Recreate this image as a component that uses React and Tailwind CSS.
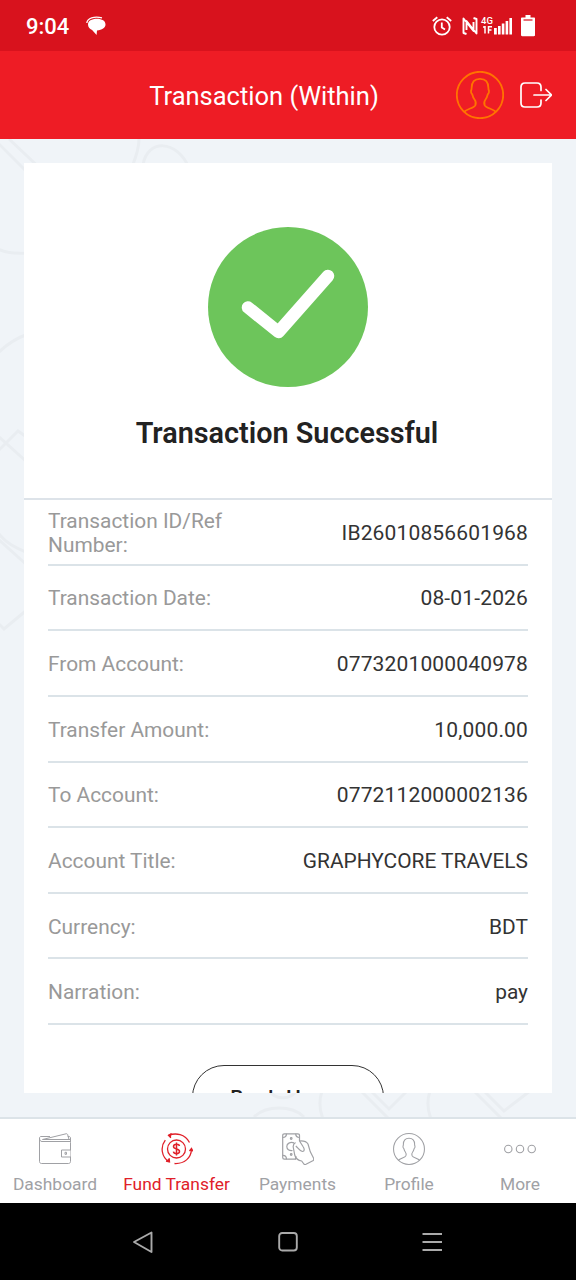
const details = [
  { label: 'Transaction ID/Ref Number:', value: 'IB26010856601968' },
  { label: 'Transaction Date:', value: '08-01-2026' },
  { label: 'From Account:', value: '0773201000040978' },
  { label: 'Transfer Amount:', value: '10,000.00' },
  { label: 'To Account:', value: '0772112000002136' },
  { label: 'Account Title:', value: 'GRAPHYCORE TRAVELS', tight: true },
  { label: 'Currency:', value: 'BDT', tight: true },
  { label: 'Narration:', value: 'pay', tight: true },
];

function UserIcon({ className, strokeWidth }) {
  return (
    <svg viewBox="0 0 48 48" fill="none" stroke="currentColor" strokeWidth={strokeWidth} className={className}>
      <circle cx="24" cy="24" r="23.2" />
      <path d="M7.800 41.200C11 37.800 18 37 19.300 34.300c.9-2 .6-4-.8-5.800-1.300-1.600-1.800-3.200-2.200-5-.9-.8-1.500-2-1.300-3.500.2-1 .7-1.500.6-3C15.600 11 18 7.800 24 7.800s8.400 3.200 8.400 9.200c-.1 1.500.4 2 .6 3 .2 1.500-.4 2.700-1.300 3.500-.4 1.800-.9 3.400-2.200 5-1.400 1.800-1.700 3.800-.8 5.800 1.300 2.700 8.300 3.500 11.500 6.900" />
    </svg>
  );
}

function StatusBar() {
  return (
    <div className="flex h-[51px] shrink-0 items-center bg-[#d8121d] pl-[26px] pr-[41px] text-white">
      <span className="w-[44px] whitespace-nowrap pt-[2px] text-[22px] font-medium">9:04</span>
      <svg viewBox="0 0 20 20" className="ml-4 h-5 w-5">
        <path d="M.8 7C1.500 2 8 .2 16 1.800" fill="none" stroke="currentColor" strokeWidth="1.300" />
        <path d="M11 2.800C16 2.800 19.500 5 19.500 8.500c0 3.200-3.500 5.500-8.500 6l-.4 4.500-4.500-5C3.500 13 2 11 2 8.500 2 5 5.500 2.800 11 2.800z" fill="currentColor" />
      </svg>
      <div className="ml-auto flex items-center">
        <svg viewBox="0 0 20 20" fill="none" stroke="currentColor" strokeWidth="1.800" className="h-5 w-5">
          <circle cx="10" cy="11" r="7.700" />
          <path d="M9.800 6.500v5l3.200 2M.8 5l4.500-3.800M19.200 5l-4.500-3.800" />
        </svg>
        <svg viewBox="0 0 16 20" fill="none" stroke="currentColor" strokeWidth="1.900" strokeLinejoin="round" className="ml-[10px] h-5 w-4">
          <path d="M4.500 18L1.500 17V2.500L11.500 15V6M11.500 2l3 1v14.500L4.500 5v9" />
        </svg>
        <div className="ml-[3px] flex h-5 w-[13px] flex-col">
          <span className="text-[9.500px] font-medium leading-[10px]">4G</span>
          <svg viewBox="0 0 12 8" className="h-2 w-3" fill="none" stroke="currentColor" strokeWidth="1.500">
            <path d="M4 0v7.500M2 1H4M7.500 7.500V.8h3.500M7.500 4h3" />
          </svg>
        </div>
        <svg viewBox="0 0 18 18" fill="currentColor" className="h-[18px] w-[18px]">
          <path d="M0 11h2.800v6.500H0zM4 9h2.600v8.500H4zM7.800 6.500h2.600v11H7.800zM11.600 4h2.600v13.500h-2.600zM15.400 1H18v16.500h-2.600z" />
        </svg>
        <svg viewBox="0 0 14 22" className="ml-[9px] h-[22px] w-[14px]">
          <path d="M4.500 0h5v2.500H13c.6 0 1 .4 1 1V20c0 .8-.4 1.200-1.200 1.200H1.200C.4 21.200 0 20.800 0 20V3.500c0-.6.400-1 1-1h3.500z" fill="currentColor" />
          <path d="M2.500 5h9" stroke="#d8121d" strokeWidth="1.200" />
        </svg>
      </div>
    </div>
  );
}

function Header() {
  return (
    <header className="flex h-[88px] shrink-0 items-center bg-[#ee1c25] pl-[120px] pr-6 text-white">
      <h1 className="w-72 pt-[3px] text-center text-[25.500px] leading-none">Transaction (Within)</h1>
      <UserIcon strokeWidth="1.800" className="ml-12 size-12 text-[#ff7300]" />
      <svg viewBox="0 0 32 26" fill="none" stroke="currentColor" strokeWidth="1.700" strokeLinecap="round" strokeLinejoin="round" className="ml-4 h-[26px] w-8">
        <path d="M21 8.500V5c0-2.500-1.500-4-4-4H5C2.500 1 1 2.500 1 5v16c0 2.500 1.500 4 4 4h12c2.500 0 4-1.500 4-4v-3M14 13h17.500M26 7.500l5.500 5.500-5.500 5.500" />
      </svg>
    </header>
  );
}

// faint line pattern behind the card
function Pattern() {
  return (
    <svg viewBox="0 0 576 978" fill="none" stroke="#e9edf1" strokeWidth="3" className="absolute inset-0 h-full w-full">
      <path d="M-4 2l40 40M9 0l36 34M139 0c0 10-3 18-7 28M143 26c4-26 34-26 46 3M-2 110c8 4 17 5 30 4M-2 214c8-8 16-14 30-19M-2 297l30 27M-2 312l20-20 10 7M-2 394c8 10 16 14 30 20M-2 400l30 27M-2 484l6 6 24-20" />
      <path d="M270 952c4 8 20 10 26 0M254 978c12-12 38-12 50 0M322 952c-3 9-3 18 1 28M361 952l27 27M371 952l18 18 18-18M430 952c-3 9-3 18 1 28M474 952l27 27M484 952l20 20 26-20" />
    </svg>
  );
}

function SuccessCard() {
  return (
    <div className="relative h-full overflow-hidden bg-white">
      <div className="flex h-[337px] flex-col items-center border-b-2 border-[#dde3e9] pt-16">
        <svg viewBox="0 0 160 160" className="h-40 w-40">
          <circle cx="80" cy="80" r="80" fill="#6dc55b" />
          <path d="M40 80.500L70.500 105 120 49" fill="none" stroke="#fff" strokeWidth="12.500" strokeLinecap="round" strokeLinejoin="round" />
        </svg>
        <h2 className="mt-[29px] whitespace-nowrap pr-[2px] text-[28.800px] font-semibold leading-[34px] text-[#222]">Transaction Successful</h2>
      </div>
      <dl className="px-6">
        {details.map((row) => (
          <div key={row.label} className="flex h-[65.650px] items-center justify-between border-b-2 border-[#dbe3e8] pt-[2px]">
            <dt className="w-[200px] text-[20.900px] leading-6 text-[#999]">{row.label}</dt>
            <dd className={`whitespace-nowrap leading-6 text-[#333] ${row.tight ? 'text-[20.900px]' : 'text-[21px] tracking-[0.150px]'}`}>
              {row.value}
            </dd>
          </div>
        ))}
      </dl>
      <button className="mx-auto mt-10 flex h-16 w-48 items-center justify-center rounded-full border-[1.500px] border-[#333] pt-[3px] text-[21px] font-medium tracking-[0.800px] text-[#222]">
        Back Home
      </button>
    </div>
  );
}

function WalletIcon() {
  return (
    <svg viewBox="0 0 32 32" fill="none" stroke="currentColor" strokeWidth="1" strokeLinejoin="round" className="size-8">
      <path d="M.5 5v23.500c0 1.200.8 2 2 2h27c1.200 0 2-.8 2-2V24M31.500 17V9.500M.5 5c0 2 1 3.500 2.500 3.500h28M.5 5c0-.9.700-1.500 1.500-1.500h9M3.500 6.500L27 .8c1-.2 1.500.2 1.700 1l1.300 4.700M3.500 6.500h28v3M28.800 3.500h1.200c.8 0 1.500.6 1.500 1.500v2" />
      <path d="M32 17h-9.500v7H32zM26 19.300h1.500v2H26z" />
    </svg>
  );
}

function TransferIcon() {
  return (
    <svg viewBox="0 0 32 32" fill="none" stroke="currentColor" strokeWidth="1.300" className="size-8">
      <circle cx="15.500" cy="16" r="9" />
      <path d="M7.500 2.300C15-.5 24 1 28.500 9.500M30.500 16.500C30 25 23.500 31 13.500 30.500M8 28.800C.5 24 -1 14 4.300 7.200" />
      <path d="M10.500.5L7.500 2.300l2.400 2.600M28.500 18l2-2.500 1.500 2.800M5 28l3.500.8-.3-3.600" fill="currentColor" />
      <path d="M18.500 13c-.3-1.300-1.500-1.800-3-1.800-1.800 0-3 .9-3 2.300 0 3.300 6 1.500 6 4.800 0 1.500-1.200 2.400-3 2.400-1.600 0-2.800-.7-3.100-2M15.500 9.500v13" strokeWidth="1.500" />
    </svg>
  );
}

function PaymentsIcon() {
  return (
    <svg viewBox="0 0 32 32" fill="none" stroke="currentColor" strokeWidth="1.200" strokeLinejoin="round" className="size-8">
      <path d="M17.500 8V2.500c0-1-.6-1.700-1.600-1.700H2.300C1.300.8.7 1.500.7 2.500v22c0 1 .6 1.700 1.600 1.700H14" />
      <path d="M.7 4.500C3 4.500 4.500 3 4.500.8M13.700.8c0 2.200 1.600 3.700 3.800 3.700M.7 22.400c2.300 0 3.800 1.500 3.800 3.800M13.500 26.200c0-1.200.2-2 .9-2.800" />
      <path d="M12 9.800C8 8.700 4.800 10.500 4.800 13.500c0 2.800 2.300 4.300 5.700 4M13.500 9.500c-1.500 1-2.500 2.600-2.300 4.500l1.500 8c1 3.500 3 5.500 7 6l1.800 2.500c.5 1 1.500 1.200 2.500.8l6.800-3.500c.9-.6 1.300-1.600.7-2.800l-3.200-6.200-2.300-7.800c-1.500-2.500-5-3.300-8.500-3L21 13.500c1.500 2.200 1.800 4.500-.2 5-2.500.2-4.500-3.500-7-5.500" />
      <circle cx="9.200" cy="5.500" r=".8" />
      <circle cx="9.200" cy="21.500" r=".8" />
    </svg>
  );
}

function MoreIcon() {
  return (
    <svg viewBox="0 0 32 32" fill="none" stroke="currentColor" strokeWidth="1.100" className="size-8">
      <circle cx="4.300" cy="16" r="3.700" />
      <circle cx="16" cy="16" r="3.700" />
      <circle cx="27.700" cy="16" r="3.700" />
    </svg>
  );
}

const tabs = [
  { name: 'Dashboard', icon: <WalletIcon />, width: 'w-[110px]' },
  { name: 'Fund Transfer', icon: <TransferIcon />, width: 'w-[133px]', active: true },
  { name: 'Payments', icon: <PaymentsIcon />, width: 'w-[109px]' },
  { name: 'Profile', icon: <UserIcon strokeWidth="1.600" className="size-8" />, width: 'w-[114px]' },
  { name: 'More', icon: <MoreIcon />, width: 'w-[108px]' },
];

function TabBar() {
  return (
    <nav className="flex h-[86px] shrink-0 border-t-2 border-[#dce3e8] bg-white">
      {tabs.map((tab) => (
        <button
          key={tab.name}
          className={`flex flex-col items-center pt-[14px] ${tab.width} ${tab.active ? 'text-[#e02029]' : 'text-[#a0a1a5]'}`}
        >
          {tab.icon}
          <span className="mt-[7px] whitespace-nowrap text-[17.400px] leading-6">{tab.name}</span>
        </button>
      ))}
    </nav>
  );
}

function SystemNav() {
  return (
    <div className="flex h-[77px] shrink-0 items-center justify-between bg-black px-[131px] text-[#aaa]">
      <svg viewBox="0 0 24 24" fill="none" stroke="currentColor" strokeWidth="1.900" strokeLinejoin="round" className="size-6">
        <path d="M20.500 2.500v19.500L3 12z" />
      </svg>
      <svg viewBox="0 0 24 24" fill="none" stroke="currentColor" strokeWidth="1.900" className="size-6">
        <rect x="3.200" y="3" width="17.600" height="17.500" rx="3" />
      </svg>
      <svg viewBox="0 0 24 24" fill="none" stroke="currentColor" strokeWidth="1.900" className="size-6">
        <path d="M1.500 4H21M1.500 12H21M1.500 20H21" />
      </svg>
    </div>
  );
}

export default function App() {
  return (
    <div className="flex h-[1280px] w-[576px] flex-col overflow-hidden font-[Roboto,sans-serif]">
      <StatusBar />
      <Header />
      <main className="relative min-h-0 flex-1 bg-[#f0f4f8] p-6">
        <Pattern />
        <SuccessCard />
      </main>
      <TabBar />
      <SystemNav />
    </div>
  );
}
